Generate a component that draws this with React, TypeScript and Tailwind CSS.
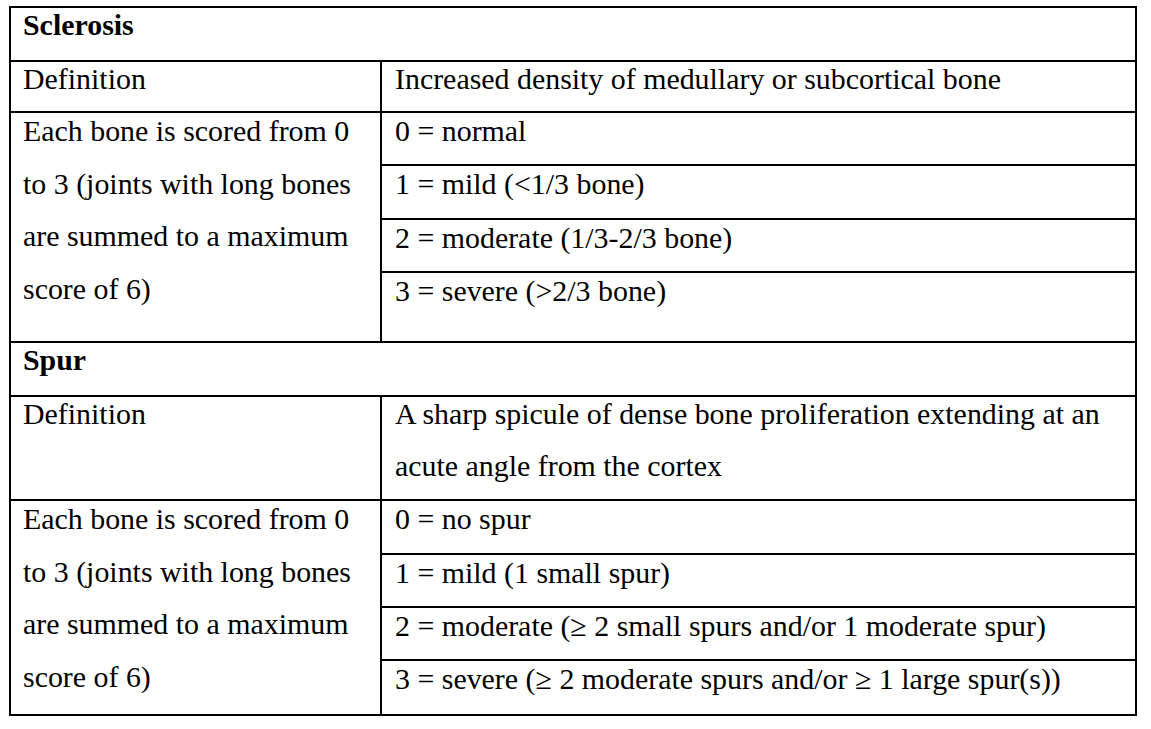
const serif = "font-['Liberation_Serif','Times_New_Roman',serif]";

type Section = {
  title: string;
  definition: string[];
  defHeight: string;
  scoring: string[];
  scores: { text: string; h: string }[];
};

const sections: Section[] = [
  {
    title: "Sclerosis",
    definition: ["Increased density of medullary or subcortical bone"],
    defHeight: "h-[51px]",
    scoring: [
      "Each bone is scored from 0",
      "to 3 (joints with long bones",
      "are summed to a maximum",
      "score of 6)",
    ],
    scores: [
      { text: "0 = normal", h: "h-[53px]" },
      { text: "1 = mild (<1/3 bone)", h: "h-[54px]" },
      { text: "2 = moderate (1/3-2/3 bone)", h: "h-[53px]" },
      { text: "3 = severe (>2/3 bone)", h: "h-[68px]" },
    ],
  },
  {
    title: "Spur",
    definition: [
      "A sharp spicule of dense bone proliferation extending at an",
      "acute angle from the cortex",
    ],
    defHeight: "h-[104px]",
    scoring: [
      "Each bone is scored from 0",
      "to 3 (joints with long bones",
      "are summed to a maximum",
      "score of 6)",
    ],
    scores: [
      { text: "0 = no spur", h: "h-[54px]" },
      { text: "1 = mild (1 small spur)", h: "h-[53px]" },
      { text: "2 = moderate (≥ 2 small spurs and/or 1 moderate spur)", h: "h-[53px]" },
      { text: "3 = severe (≥ 2 moderate spurs and/or ≥ 1 large spur(s))", h: "h-[53px]" },
    ],
  },
];

function SectionRows({ s, last }: { s: Section; last: boolean }) {
  return (
    <>
      <div className="h-[54px] border-b-2 border-black pl-[12px] font-bold leading-[33px]">
        {s.title}
      </div>
      <div className={`flex ${s.defHeight} border-b-2 border-black`}>
        <div className="w-[371px] shrink-0 border-r-2 border-black pl-[12px] leading-[33px]">
          Definition
        </div>
        <div className="flex-1 pl-[13px]">
          {s.definition.map((line) => (
            <div key={line} className="h-[52px] leading-[33px]">
              {line}
            </div>
          ))}
        </div>
      </div>
      <div className={`flex ${last ? "" : "border-b-2 border-black"}`}>
        <div className="w-[371px] shrink-0 border-r-2 border-black pl-[12px]">
          {s.scoring.map((line) => (
            <div key={line} className="h-[52.5px] pt-[1px] leading-[33px] whitespace-nowrap">
              {line}
            </div>
          ))}
        </div>
        <div className="flex flex-1 flex-col">
          {s.scores.map((row, i) => (
            <div
              key={row.text}
              className={`${row.h} pl-[13px] pt-[1px] leading-[33px] ${
                i < s.scores.length - 1 ? "border-b-2 border-black" : ""
              }`}
            >
              {row.text}
            </div>
          ))}
        </div>
      </div>
    </>
  );
}

export default function App() {
  return (
    <div className={`h-[729px] w-[1151px] bg-white pl-[9px] pt-[6px] text-[29.9px] text-black ${serif}`}>
      <div className="w-[1128px] border-2 border-black">
        {sections.map((s, i) => (
          <SectionRows key={s.title} s={s} last={i === sections.length - 1} />
        ))}
      </div>
    </div>
  );
}
